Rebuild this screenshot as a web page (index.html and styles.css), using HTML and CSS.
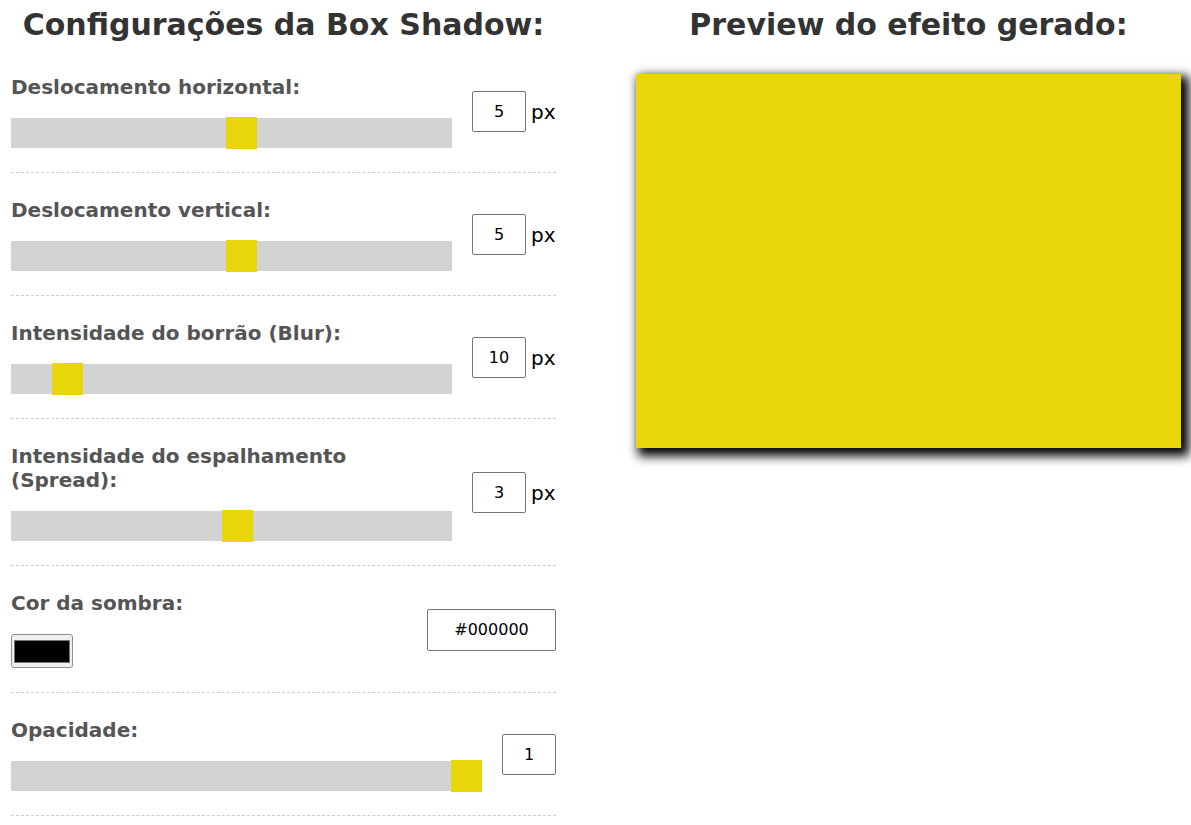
FILE: index.html
```html
<!DOCTYPE html>
<html lang="pt-BR">
<head>
<meta charset="utf-8">
<title>Box Shadow Generator</title>
<link rel="stylesheet" href="styles.css">
</head>
<body>
<main class="page">
  <section class="column">
    <h2 class="title">Configurações da Box Shadow:</h2>

    <div class="group">
      <div class="left">
        <label class="label" for="h">Deslocamento horizontal:</label>
        <input class="slider" type="range" id="h" min="-100" max="100" value="5">
      </div>
      <div class="right">
        <input class="num" type="text" value="5">
        <span class="unit">px</span>
      </div>
    </div>

    <div class="group">
      <div class="left">
        <label class="label" for="v">Deslocamento vertical:</label>
        <input class="slider" type="range" id="v" min="-100" max="100" value="5">
      </div>
      <div class="right">
        <input class="num" type="text" value="5">
        <span class="unit">px</span>
      </div>
    </div>

    <div class="group">
      <div class="left">
        <label class="label" for="b">Intensidade do borrão (Blur):</label>
        <input class="slider" type="range" id="b" min="0" max="100" value="10">
      </div>
      <div class="right">
        <input class="num" type="text" value="10">
        <span class="unit">px</span>
      </div>
    </div>

    <div class="group">
      <div class="left">
        <label class="label" for="s">Intensidade do espalhamento (Spread):</label>
        <input class="slider" type="range" id="s" min="-100" max="100" value="3">
      </div>
      <div class="right">
        <input class="num" type="text" value="3">
        <span class="unit">px</span>
      </div>
    </div>

    <div class="group">
      <div class="left">
        <label class="label" for="c">Cor da sombra:</label>
        <input class="color" type="color" id="c" value="#000000">
      </div>
      <div class="right">
        <input class="hex" type="text" value="#000000">
      </div>
    </div>

    <div class="group">
      <div class="left">
        <label class="label" for="o">Opacidade:</label>
        <input class="slider" type="range" id="o" min="0" max="1" step="0.1" value="1">
      </div>
      <div class="right">
        <input class="num" type="text" value="1">
      </div>
    </div>
  </section>

  <section class="column">
    <h2 class="title">Preview do efeito gerado:</h2>
    <div class="preview"></div>
  </section>
</main>
</body>
</html>
```

FILE: styles.css
```css
html, body {
  margin: 0;
  padding: 0;
  background: #fff;
}

body {
  font-family: "DejaVu Sans", Verdana, sans-serif;
  color: #333;
}

.page {
  display: flex;
  gap: 80px;
  padding: 0 10px 0 11px;
}

.column {
  width: 545px;
  flex: none;
}

.title {
  margin: 0;
  height: 50px;
  line-height: 50px;
  font-size: 30px;
  font-weight: bold;
  text-align: center;
  color: #333;
}

.group {
  display: flex;
  align-items: center;
  gap: 20px;
  padding: 25px 0 24px;
  border-bottom: 1px dashed #ccc;
}

.left {
  flex: 1;
  min-width: 0;
}

.label {
  display: block;
  font-size: 20px;
  line-height: 24px;
  font-weight: bold;
  color: #555;
  margin-bottom: 19px;
}

.slider {
  -webkit-appearance: none;
  appearance: none;
  display: block;
  width: 100%;
  height: 30px;
  margin: 0;
  padding: 0;
  background: #d3d3d3;
  outline: none;
  border: none;
}

.slider::-webkit-slider-thumb {
  -webkit-appearance: none;
  appearance: none;
  width: 31px;
  height: 32px;
  background: #e8d50a;
  border: none;
  cursor: pointer;
}

.right {
  display: flex;
  align-items: center;
  flex: none;
}

.num,
.hex {
  box-sizing: border-box;
  height: 41px;
  margin: 0;
  padding: 0;
  border: 1px solid #767676;
  border-radius: 2px;
  background: #fff;
  font-family: "DejaVu Sans", Verdana, sans-serif;
  font-size: 16px;
  color: #000;
  text-align: center;
  outline: none;
}

.num {
  width: 54px;
}

.hex {
  width: 129px;
  height: 42px;
}

.unit {
  width: 25px;
  margin-left: 5px;
  font-size: 20px;
  color: #000;
}

.color {
  display: block;
  box-sizing: border-box;
  width: 62px;
  height: 34px;
  margin: 0;
  padding: 5px 2px 4px;
  border: 1px solid #8f8f8f;
  border-radius: 3px;
  background: #efefef;
  cursor: pointer;
}

.color::-webkit-color-swatch-wrapper {
  padding: 0;
}

.color::-webkit-color-swatch {
  border: 1px solid #777;
  border-radius: 0;
}

.preview {
  margin-top: 24px;
  height: 374px;
  background: #e8d50a;
  box-shadow: 5px 5px 10px 3px #000;
}
```
